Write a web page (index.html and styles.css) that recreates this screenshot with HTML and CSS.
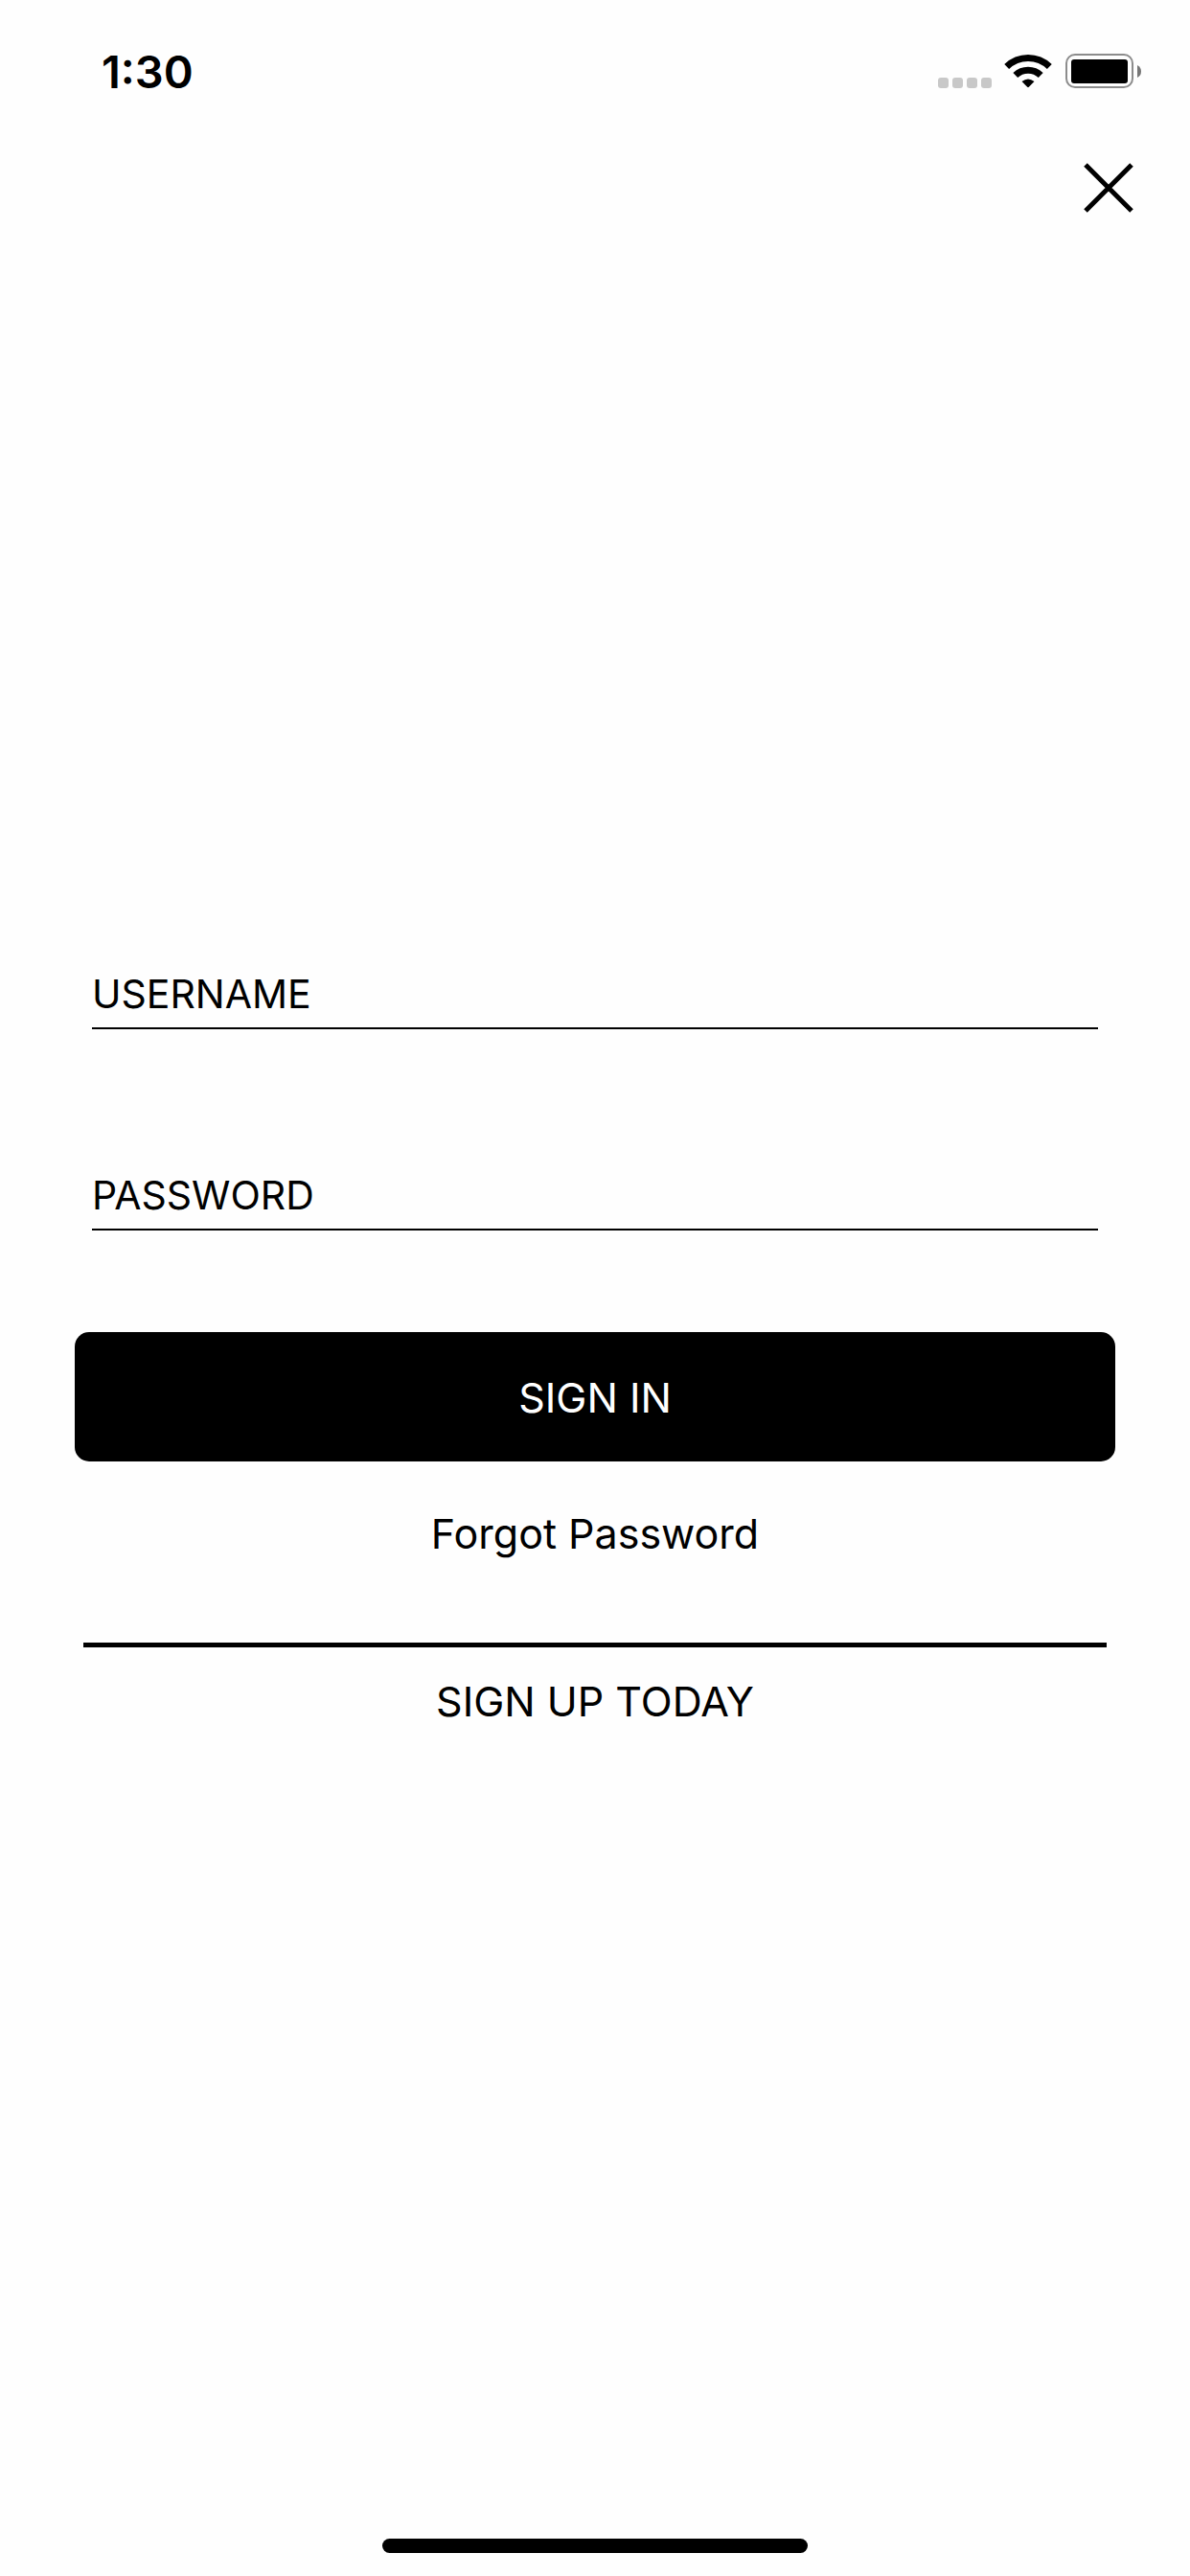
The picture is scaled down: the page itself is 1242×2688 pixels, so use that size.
FILE: index.html
```
<!DOCTYPE html>
<html lang="en">
<head>
  <meta charset="UTF-8">
  <meta name="viewport" content="width=device-width, initial-scale=1.0">
  <title>Sign In</title>
  <link rel="stylesheet" href="styles.css">
</head>
<body>
  <div class="status-bar">
    <span class="time">1:30</span>
    <svg class="status-icons" width="212" height="36" viewBox="0 0 212 36" aria-hidden="true">
      <!-- Signal -->
      <g fill="#c8c8c8">
        <rect x="0" y="25" width="11" height="11" rx="3"/>
        <rect x="15" y="25" width="11" height="11" rx="3"/>
        <rect x="30" y="25" width="11" height="11" rx="3"/>
        <rect x="45" y="25" width="11" height="11" rx="3"/>
      </g>
      <!-- Wifi -->
      <g fill="none" stroke="#000" stroke-width="7">
        <path d="M71.700 13.500 A32 32 0 0 1 116.300 13.500"/>
        <path d="M80.800 22.500 A19 19 0 0 1 107.200 22.500"/>
      </g>
      <path d="M87.500 29 Q94 24 100.500 29 L94.800 34.800 Q94 35.600 93.200 34.800 Z"/>
      <!-- Battery -->
      <rect x="134" y="1" width="69" height="34" rx="9" fill="none" stroke="#8c8c8c" stroke-width="2"/>
      <rect x="139" y="6" width="59" height="25" rx="3"/>
      <path d="M208 12 Q212 14 212 18.500 Q212 23 208 25 Z" fill="#777"/>
    </svg>
  </div>

  <div class="top-bar">
    <button type="button" class="close-btn" aria-label="Close">
      <svg width="52" height="52" viewBox="0 0 52 52">
        <path d="M2 2 L50 50 M50 2 L2 50" stroke="#000" stroke-width="5"/>
      </svg>
    </button>
  </div>

  <main class="container">
    <form class="login-form">
      <input type="text" name="username" placeholder="USERNAME" aria-label="Username">
      <input type="password" name="password" placeholder="PASSWORD" aria-label="Password">
      <button type="submit" class="sign-in">SIGN IN</button>
    </form>
    <a href="#" class="link forgot">Forgot Password</a>
    <hr class="divider">
    <a href="#" class="link">SIGN UP TODAY</a>
  </main>

  <div class="footer">
    <div class="home-bar"></div>
  </div>
</body>
</html>
```
FILE: styles.css
```
* {
  box-sizing: border-box;
  margin: 0;
  padding: 0;
}

body {
  font-family: Inter, "Liberation Sans", sans-serif;
  background-color: #fefefe;
  color: #000;
  display: flex;
  flex-direction: column;
  min-height: 100vh;
}

/* Status bar */
.status-bar {
  display: flex;
  justify-content: space-between;
  align-items: center;
  height: 148px;
  padding: 0 51px 0 106px;
}

.time {
  font-size: 47px;
  font-weight: 600;
}

.top-bar {
  display: flex;
  justify-content: flex-end;
  height: 92px;
  padding: 22px 59px 0 0;
}

.close-btn {
  width: 52px;
  height: 52px;
  background: none;
  border: none;
  cursor: pointer;
}

.close-btn svg {
  display: block;
}

/* Login form */
.container {
  flex: 1;
  display: flex;
  flex-direction: column;
  align-items: center;
  justify-content: center;
  padding: 0 78px;
}

.login-form {
  display: flex;
  flex-direction: column;
  width: 100%;
}

.login-form input {
  height: 70px;
  margin: 0 18px 140px;
  padding-bottom: 3px;
  font-family: inherit;
  font-size: 41px;
  color: #000;
  background: none;
  border: none;
  border-bottom: 2px solid #000;
  border-radius: 0;
  outline: none;
}

.login-form input[type="password"] {
  margin-bottom: 106px;
}

.login-form input::placeholder {
  color: #000;
  opacity: 1;
}

.sign-in {
  height: 135px;
  font-family: inherit;
  font-size: 43px;
  color: #fff;
  background-color: #000;
  border: none;
  border-radius: 15px;
  cursor: pointer;
}

.link {
  font-size: 43px;
  line-height: 52px;
  color: #000;
  text-decoration: none;
}

.forgot {
  margin-top: 49px;
}

.divider {
  align-self: stretch;
  height: 5px;
  margin: 88px 9px 30px;
  background-color: #000;
  border: none;
}

/* Home indicator */
.footer {
  display: flex;
  justify-content: center;
  padding: 84px 0 24px;
}

.home-bar {
  width: 444px;
  height: 15px;
  background-color: #000;
  border-radius: 8px;
}
```
